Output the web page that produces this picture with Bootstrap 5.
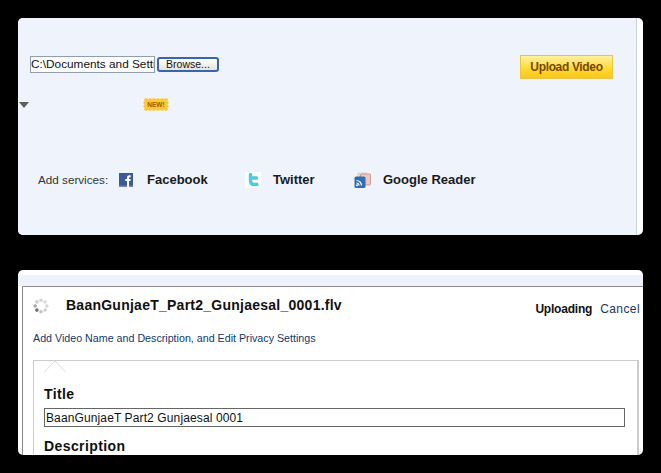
<!DOCTYPE html>
<html lang="en">
<head>
<meta charset="utf-8">
<title>Upload Video</title>
<link href="https://cdn.jsdelivr.net/npm/bootstrap@5.3.0/dist/css/bootstrap.min.css" rel="stylesheet">
<style>
html,body{height:100%;overflow:hidden}
body{background:#000;font-family:"Liberation Sans",Arial,sans-serif;font-size:12px;color:#111;padding:18px 18px 0 18px}
.stage{width:625px;gap:35px}
.sheet{background:#fff;border-radius:5px;overflow:hidden}
.sheet-a{height:217px}
.pale{background:#eff3fc;border-right:1px solid #c9d3e6;margin-right:6px;height:100%;padding:37px 23px 0 0}
.file-row{height:24px;padding-left:12px}
.file-group{margin-bottom:6px}
.file-field{width:125px;height:17px;border:1px solid #8f9fb0;background:#fff;font:11.8px "Liberation Sans",sans-serif;padding:0;color:#111;outline:0}
.browse{width:62px;height:15px;margin-left:2px;padding:0;border:2px solid #3a66a5;border-radius:3px;background:linear-gradient(#fff,#e4e4dc);font:10.5px/11px "Liberation Sans",sans-serif;color:#111}
.upload{width:93px;height:24px;padding:0;border:1px solid #e6c64a;border-radius:0;background:linear-gradient(#fff0a0,#ffd92e 60%,#fcc51a);font:bold 12px "Liberation Sans",sans-serif;letter-spacing:-.35px;color:#7a4600}
.tool-row{height:13px;margin-top:19px;padding-left:1px}
.caret-tri{width:0;height:0;border-left:5.5px solid transparent;border-right:5.5px solid transparent;border-top:6px solid #5d5d5d}
.fresh{position:relative;width:26px;height:13px;margin-left:114px}
.fresh svg{display:block}
.fresh span{position:absolute;left:0;right:0;top:2px;text-align:center;font:bold 6.500px/9px "Liberation Sans",sans-serif;color:#9a5f00}
.svc-row{height:16px;margin-top:61px;padding-left:20px}
.svc-label{width:81px;color:#333;font-size:11.7px}
.svc-name{font-weight:700;font-size:13px;letter-spacing:0;color:#1a1a1a}
.svc-fb{width:126px;gap:14px}
.svc-tw{width:109px;gap:12px}
.svc-gr{gap:12px}
.svc-icon{flex:none;display:block}
.sheet-b{height:185px;padding:5px 0 0 4px}
.stripe{height:11px;background:#eef2fb;margin-left:-4px}
.inner{border-top:1px solid #8a8a8a;border-left:1px solid #8a8a8a;height:169px;padding:0 3px 0 10px}
.head-row{height:40px;padding-top:11px}
.spinner{flex:none;margin-right:15px}
.fname{font-weight:700;font-size:14px;letter-spacing:.25px;line-height:16px;color:#111;margin-left:2px;margin-top:-1px}
.status{font-weight:700;font-size:12px;line-height:14px;padding-top:4px;margin-left:auto;letter-spacing:-.2px}
.cancel{color:#17375e;letter-spacing:.4px;text-decoration:none;margin-left:8px;line-height:14px;padding-top:4px;font-size:12px}
.detail-link{display:block;color:#123a6b;text-decoration:none;font-size:10.7px;line-height:14px;margin-top:4px}
.privacy{position:relative;margin-top:15px;margin-right:1px;height:101px;border:1px solid #ccc;border-right-width:2px;border-bottom:0;padding:25px 12px 0 10px}
.notch{position:absolute;left:10px;top:-1px}
.fld-label{font-weight:700;font-size:14px;letter-spacing:.4px;line-height:16px;color:#111}
.title-field{display:block;width:581px;height:19px;margin-top:6px;border:1px solid #666;padding:0 1px;font:12px "Liberation Sans",sans-serif;letter-spacing:.12px;color:#111;outline:0}
.desc-label{margin-top:11px}
</style>
</head>
<body>
<main class="stage d-flex flex-column">
  <section class="sheet sheet-a">
    <div class="pale">
      <div class="file-row d-flex align-items-center justify-content-between">
        <div class="file-group d-flex align-items-center">
          <input class="file-field" type="text" readonly value="C:\Documents and Settings" aria-label="File">
          <button class="browse" type="button">Browse...</button>
        </div>
        <button class="upload" type="button">Upload Video</button>
      </div>
      <div class="tool-row d-flex align-items-center">
        <div class="caret-tri"></div>
        <div class="fresh">
          <svg width="26" height="13" viewBox="0 0 26 13"><polygon fill="#fdc93a" points="1,1 3,0 5,1 7,0 9,1 11,0 13,1 15,0 17,1 19,0 21,1 23,0 25,1 24.500,3 26,4.500 24.500,6.500 26,8.500 24.500,10 25,12 23,13 21,12 19,13 17,12 15,13 13,12 11,13 9,12 7,13 5,12 3,13 1,12 1.500,10 0,8.500 1.500,6.500 0,4.500 1.500,3"/></svg>
          <span>NEW!</span>
        </div>
      </div>
      <div class="svc-row d-flex align-items-center">
        <span class="svc-label">Add services:</span>
        <div class="svc-fb d-flex align-items-center">
          <svg class="svc-icon" width="14" height="14" viewBox="0 0 14 14"><rect width="14" height="14" fill="#3b5a98"/><rect y="12.500" width="14" height="1.500" fill="#6f86b5"/><path fill="#fff" d="M8 14V8H6.300V5.900H8V4.600C8 3 9 2.200 10.400 2.200h1.300v2h-.9c-.6 0-.8.3-.8.8v.9h1.700L11.400 8H10v6z"/></svg>
          <span class="svc-name">Facebook</span>
        </div>
        <div class="svc-tw d-flex align-items-center">
          <svg class="svc-icon" width="16" height="16" viewBox="0 0 16 16"><rect width="16" height="16" fill="#fbfeff"/><path fill="none" stroke="#4fcbe0" stroke-width="3.400" stroke-linecap="round" d="M5.500 2.500v6.500c0 2.500 1.500 3.500 3.500 3.500h3M5.500 6h6"/></svg>
          <span class="svc-name">Twitter</span>
        </div>
        <div class="svc-gr d-flex align-items-center">
          <svg class="svc-icon" width="17" height="16" viewBox="0 0 17 16"><rect x="3.500" y="0.500" width="10" height="10" rx="1" fill="#d9dccb"/><rect x="6.500" y="2" width="10" height="11" rx="1" fill="#edc6c2" stroke="#c98b86" stroke-width=".8"/><rect x="0.500" y="4.500" width="11" height="11.500" rx="1.500" fill="#2f6db5"/><g fill="none" stroke="#fff" stroke-width="1.200"><path d="M2.500 8.500a5 5 0 0 1 5 5"/><path d="M2.500 11a2.500 2.500 0 0 1 2.500 2.500"/></g><circle cx="3" cy="13.300" r="1" fill="#fff"/></svg>
          <span class="svc-name">Google Reader</span>
        </div>
      </div>
    </div>
  </section>
  <section class="sheet sheet-b">
    <div class="stripe"></div>
    <div class="inner">
      <div class="head-row d-flex align-items-start">
        <svg class="spinner" width="16" height="16" viewBox="0 0 16 16">
          <circle cx="8" cy="2.200" r="1.800" fill="#d6d6d6"/><circle cx="12.100" cy="3.900" r="1.800" fill="#dcdcdc"/><circle cx="13.800" cy="8" r="1.800" fill="#d6d6d6"/><circle cx="12.100" cy="12.100" r="1.800" fill="#d0d0d0"/><circle cx="8" cy="13.800" r="1.800" fill="#c4c4c4"/><circle cx="3.900" cy="12.100" r="1.800" fill="#6e6e6e"/><circle cx="2.200" cy="8" r="1.800" fill="#a8a8a8"/><circle cx="3.900" cy="3.900" r="1.800" fill="#cfcfcf"/>
        </svg>
        <span class="fname">BaanGunjaeT_Part2_Gunjaesal_0001.flv</span>
        <span class="status">Uploading</span>
        <a class="cancel" href="#">Cancel</a>
      </div>
      <a class="detail-link" href="#">Add Video Name and Description, and Edit Privacy Settings</a>
      <div class="privacy">
        <svg class="notch" width="22" height="13" viewBox="0 0 22 13"><polyline points="0,12.500 11,1 22,12.500" fill="none" stroke="#dcdcdc"/></svg>
        <div class="fld-label">Title</div>
        <input class="title-field" type="text" value="BaanGunjaeT Part2 Gunjaesal 0001" aria-label="Title">
        <div class="fld-label desc-label">Description</div>
      </div>
    </div>
  </section>
</main>
<script src="https://cdn.jsdelivr.net/npm/bootstrap@5.3.0/dist/js/bootstrap.bundle.min.js"></script>
</body>
</html>
